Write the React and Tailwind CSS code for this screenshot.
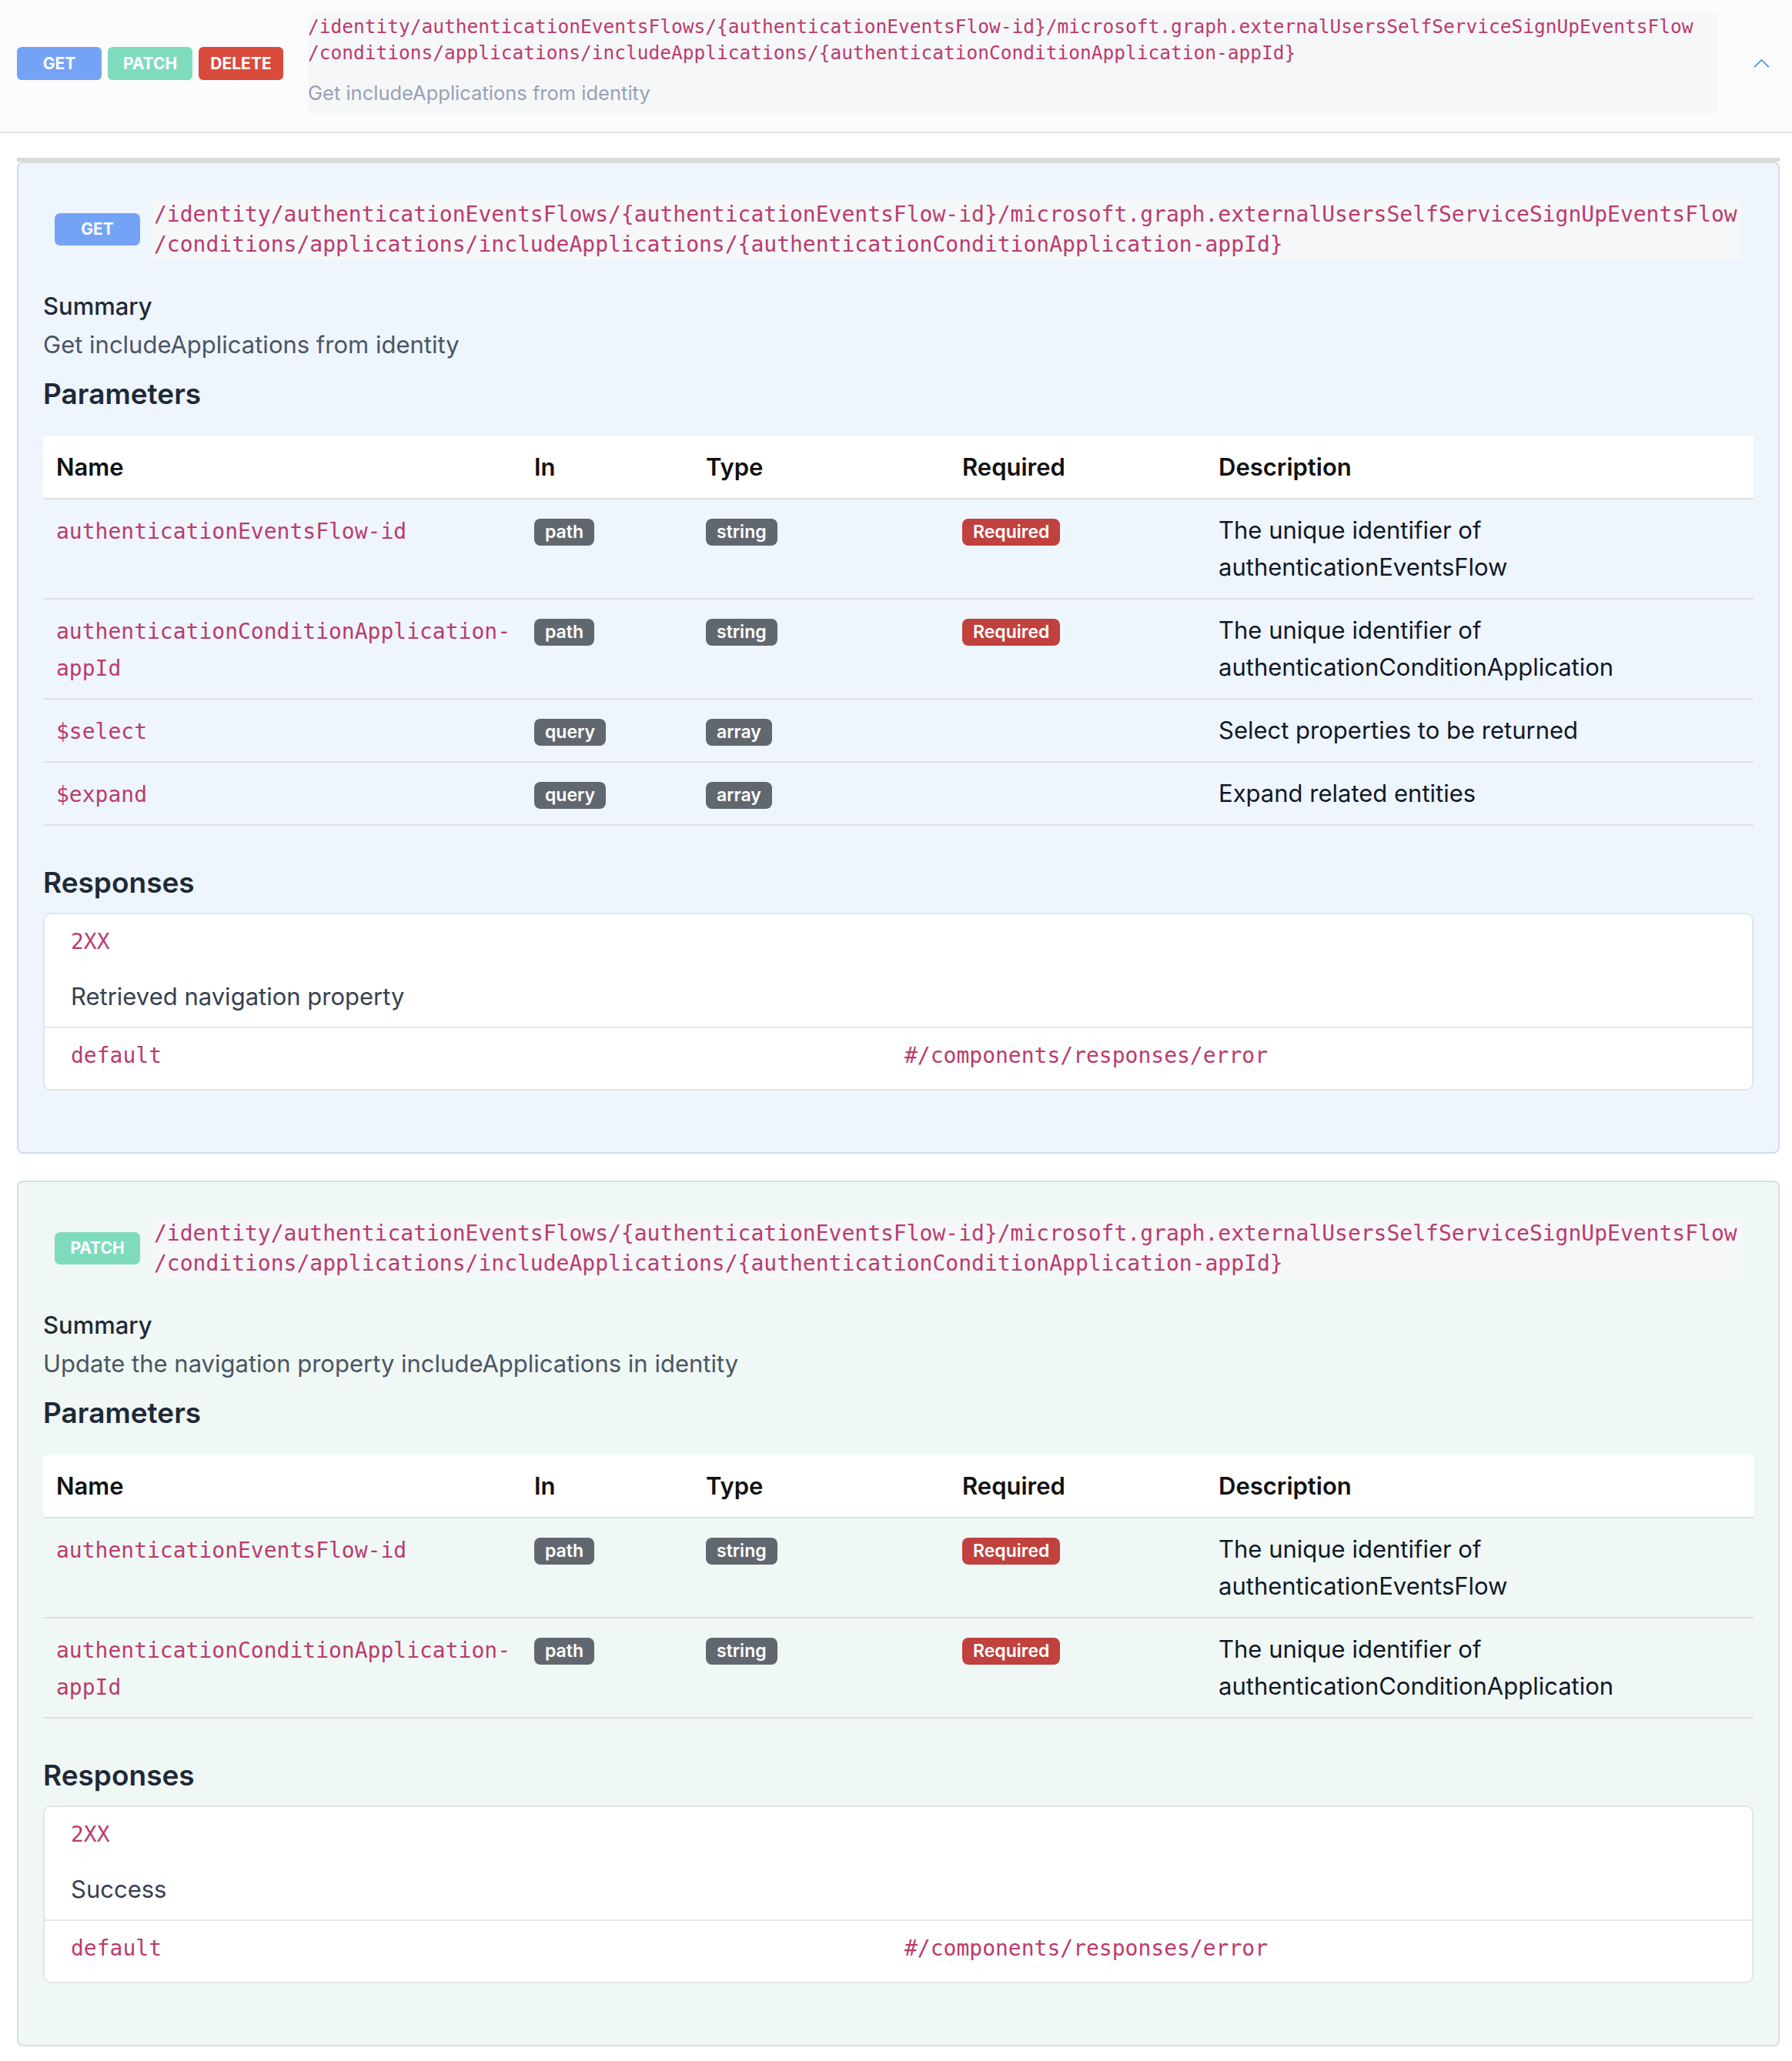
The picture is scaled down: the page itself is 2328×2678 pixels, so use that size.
import React from "react";

const pathLine1 = "/identity/authenticationEventsFlows/{authenticationEventsFlow-id}/microsoft.graph.externalUsersSelfServiceSignUpEventsFlow";
const pathLine2 = "/conditions/applications/includeApplications/{authenticationConditionApplication-appId}";

const methodStyles = {
    GET: "bg-[#74a3f6]",
    PATCH: "bg-[#7fdbbd]",
    DELETE: "bg-[#d84b3c]",
};

const cardStyles = {
    GET: "bg-[#eef5fd] border-[#d3dbe5]",
    PATCH: "bg-[#f0f8f5] border-[#d5dfdb]",
};

const idParams = [
    {name: "authenticationEventsFlow-id", in: "path", type: "string", required: true, description: "The unique identifier of authenticationEventsFlow"},
    {name: "authenticationConditionApplication-appId", in: "path", type: "string", required: true, description: "The unique identifier of authenticationConditionApplication"},
];

const operations = [
    {
        method: "GET",
        summary: "Get includeApplications from identity",
        params: [
            ...idParams,
            {name: "$select", in: "query", type: "array", required: false, description: "Select properties to be returned"},
            {name: "$expand", in: "query", type: "array", required: false, description: "Expand related entities"},
        ],
        success: "Retrieved navigation property",
    },
    {
        method: "PATCH",
        summary: "Update the navigation property includeApplications in identity",
        params: idParams,
        success: "Success",
    },
];

const Pill = ({children, color = "bg-[#61676f]"}) => (
    <span className={`inline-flex items-center h-[35px] px-[14px] rounded-[8px] text-white text-[23px] font-semibold leading-none ${color}`}>
        {children}
    </span>
);

const ParamRow = ({param}) => (
    <div className="grid grid-cols-[621px_223px_333px_333px_711px] border-b-2 border-[#dde2e8]">
        <div className="pl-[17px] pr-[8px] pt-[18px] pb-[14px] font-['DejaVu_Sans_Mono',monospace] text-[28px] leading-[48px] text-[#bb3b6d]">
            {param.name}
        </div>
        <div className="px-[17px] py-[16px]">
            <div className="mt-[9px]"><Pill>{param.in}</Pill></div>
        </div>
        <div className="px-[17px] py-[16px]">
            <div className="mt-[9px]"><Pill>{param.type}</Pill></div>
        </div>
        <div className="px-[17px] py-[16px]">
            {param.required && <div className="mt-[9px]"><Pill color="bg-[#c0413d]">Required</Pill></div>}
        </div>
        <div className="pl-[17px] pr-[120px] py-[16px] text-[31px] leading-[48px] text-[#111827]">
            {param.description}
        </div>
    </div>
);

const OperationCard = ({op}) => (
    <div className={`w-[2290px] border-2 rounded-[8px] px-[32px] pt-[32px] pb-[80px] ${cardStyles[op.method]}`}>
        {/* method + path */}
        <div className="flex items-center gap-[16px] p-[15px]">
            <span className={`w-[111px] h-[42px] shrink-0 rounded-[7px] flex items-center justify-center text-white text-[21px] font-bold ${methodStyles[op.method]}`}>
                {op.method}
            </span>
            <div className="flex-1 bg-[#f5f7f9] px-[2px] font-['DejaVu_Sans_Mono',monospace] text-[28px] leading-[39px] text-[#bb3b6d]">
                <div>{pathLine1}</div>
                <div>{pathLine2}</div>
            </div>
        </div>

        <div className="mt-[24px] text-[31px] leading-[44px] font-medium text-[#1f2937]">Summary</div>
        <div className="mt-[6px] text-[31px] leading-[44px] text-[#4b5563]">{op.summary}</div>

        <h3 className="mt-[18px] text-[37px] leading-[48px] font-semibold text-[#1f2937]">Parameters</h3>

        <div className="mt-[31px]">
            <div className="grid grid-cols-[621px_223px_333px_333px_711px] bg-white border-b-2 border-[#dde2e8] text-[31px] leading-[48px] font-semibold text-[#111]">
                <div className="px-[17px] py-[16px]">Name</div>
                <div className="px-[17px] py-[16px]">In</div>
                <div className="px-[17px] py-[16px]">Type</div>
                <div className="px-[17px] py-[16px]">Required</div>
                <div className="px-[17px] py-[16px]">Description</div>
            </div>
            {op.params.map(p => <ParamRow key={p.name} param={p}/>)}
        </div>

        <h3 className="mt-[50px] text-[37px] leading-[48px] font-semibold text-[#1f2937]">Responses</h3>

        <div className="mt-[15px] bg-white border-2 border-[#e3e6ea] rounded-[10px]">
            <div className="px-[34px] pt-[16px] pb-[17px] border-b-2 border-[#e3e6ea]">
                <div className="font-['DejaVu_Sans_Mono',monospace] text-[28px] leading-[39px] text-[#bb3b6d]">2XX</div>
                <div className="mt-[30px] text-[31px] leading-[44px] text-[#374151]">{op.success}</div>
            </div>
            <div className="grid grid-cols-2 gap-[16px] px-[34px] pt-[16px] pb-[24px] font-['DejaVu_Sans_Mono',monospace] text-[28px] leading-[39px] text-[#bb3b6d]">
                <div>default</div>
                <div>#/components/responses/error</div>
            </div>
        </div>
    </div>
);

const App = () => {
    return (
        <div className="w-[2328px] min-h-[2678px] bg-white font-['Inter',sans-serif] pb-[17px]">
            {/* collapsed endpoint header */}
            <div className="flex items-center pt-[18px] pb-[24px] pl-[22px] bg-[#fcfcfc] border-b-2 border-[#e3e3e3]">
                <div className="flex gap-[8px]">
                    {["GET", "PATCH", "DELETE"].map(m => (
                        <span key={m} className={`w-[110px] h-[43px] rounded-[6px] flex items-center justify-center text-white text-[21px] font-bold ${methodStyles[m]}`}>
                            {m}
                        </span>
                    ))}
                </div>
                <div className="ml-[32px] flex-1 bg-[#f6f7f9] pb-[8px]">
                    <div className="font-['DejaVu_Sans_Mono',monospace] text-[24.5px] leading-[34px] text-[#bb3b6d]">
                        <div>{pathLine1}</div>
                        <div>{pathLine2}</div>
                    </div>
                    <div className="mt-[17px] text-[25.5px] leading-[36px] text-[#97a1b4]">Get includeApplications from identity</div>
                </div>
                <button className="ml-[47px] mr-[29px] w-[21px] h-[11px] text-[#3b82f6]">
                    <svg width="21" height="11" viewBox="0 0 21 11" fill="none" stroke="currentColor" strokeWidth="1.6">
                        <polyline points="1,10.2 10.5,1 20,10.2"/>
                    </svg>
                </button>
            </div>

            <div className="ml-[22px] mt-[32px] w-[2290px] h-[5px] bg-[#d9d9d9]"/>
            <div className="ml-[22px] flex flex-col gap-[35px]">
                {operations.map(op => <OperationCard key={op.method} op={op}/>)}
            </div>
        </div>
    );
};

export default App;
